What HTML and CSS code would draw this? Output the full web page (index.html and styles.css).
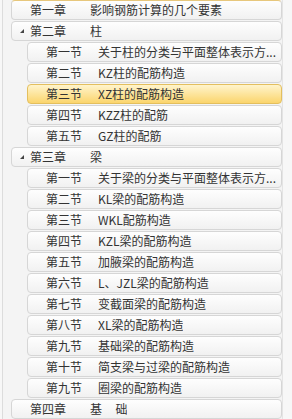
FILE: index.html
```html
<!DOCTYPE html>
<html lang="zh">
<head>
  <meta charset="UTF-8">
  <title>钢筋目录</title>
  <link rel="stylesheet" href="styles.css">
</head>
<body>
  <div class="tree">
    <div class="row chapter first"><span class="num">第一章</span><span class="name">影响钢筋计算的几个要素</span></div>

    <div class="row chapter open"><span class="arrow"></span><span class="num">第二章</span><span class="name">柱</span></div>
    <div class="row section"><span class="num">第一节</span><span class="name">关于柱的分类与平面整体表示方...</span></div>
    <div class="row section"><span class="num">第二节</span><span class="name">KZ柱的配筋构造</span></div>
    <div class="row section selected"><span class="num">第三节</span><span class="name">XZ柱的配筋构造</span></div>
    <div class="row section"><span class="num">第四节</span><span class="name">KZZ柱的配筋</span></div>
    <div class="row section"><span class="num">第五节</span><span class="name">GZ柱的配筋</span></div>

    <div class="row chapter open"><span class="arrow"></span><span class="num">第三章</span><span class="name">梁</span></div>
    <div class="row section"><span class="num">第一节</span><span class="name">关于梁的分类与平面整体表示方...</span></div>
    <div class="row section"><span class="num">第二节</span><span class="name">KL梁的配筋构造</span></div>
    <div class="row section"><span class="num">第三节</span><span class="name">WKL配筋构造</span></div>
    <div class="row section"><span class="num">第四节</span><span class="name">KZL梁的配筋构造</span></div>
    <div class="row section"><span class="num">第五节</span><span class="name">加腋梁的配筋构造</span></div>
    <div class="row section"><span class="num">第六节</span><span class="name">L、JZL梁的配筋构造</span></div>
    <div class="row section"><span class="num">第七节</span><span class="name">变截面梁的配筋构造</span></div>
    <div class="row section"><span class="num">第八节</span><span class="name">XL梁的配筋构造</span></div>
    <div class="row section"><span class="num">第九节</span><span class="name">基础梁的配筋构造</span></div>
    <div class="row section"><span class="num">第十节</span><span class="name">简支梁与过梁的配筋构造</span></div>
    <div class="row section"><span class="num">第九节</span><span class="name">圈梁的配筋构造</span></div>

    <div class="row chapter"><span class="num">第四章</span><span class="name">基&nbsp;&nbsp;&nbsp;&nbsp;&nbsp;础</span></div>
  </div>
</body>
</html>
```

FILE: styles.css
```css
html, body {
  margin: 0;
  height: 100%;
  overflow: hidden;
}
body {
  font-family: "Noto Sans CJK SC", "Liberation Sans", sans-serif;
  font-size: 12px;
  color: #333;
  background-color: #f7f7f7;
}
.tree {
  height: 100%;
  margin-left: 2px;
  margin-right: 9px;
  padding: 0 0 0 8px;
  border-left: 1px solid #dcdcdc;
  border-right: 1px solid #e4e4e4;
  background-color: #f4f4f4;
}
.row {
  box-sizing: border-box;
  display: flex;
  align-items: center;
  height: 20px;
  margin-bottom: 1px;
  border: 1px solid #d6d6d6;
  border-radius: 4px;
  background: linear-gradient(#fefefe, #f1f1f1);
  white-space: nowrap;
  overflow: hidden;
  position: relative;
  line-height: 16px;
}
.row.first {
  border-top-color: #e7c77c;
}
.chapter {
  padding-left: 18px;
}
.section {
  margin-left: 16px;
  padding-left: 18px;
}
.selected {
  border-color: #e3bf5e;
  background: linear-gradient(#fff4cc, #fbd56d);
}
.chapter .num {
  width: 60px;
  flex: none;
}
.section .num {
  width: 52px;
  flex: none;
}
.name {
  overflow: hidden;
}
.arrow {
  position: absolute;
  left: 8px;
  top: 7px;
  width: 0;
  height: 0;
  border-left: 4px solid transparent;
  border-bottom: 4px solid #444;
}
```
